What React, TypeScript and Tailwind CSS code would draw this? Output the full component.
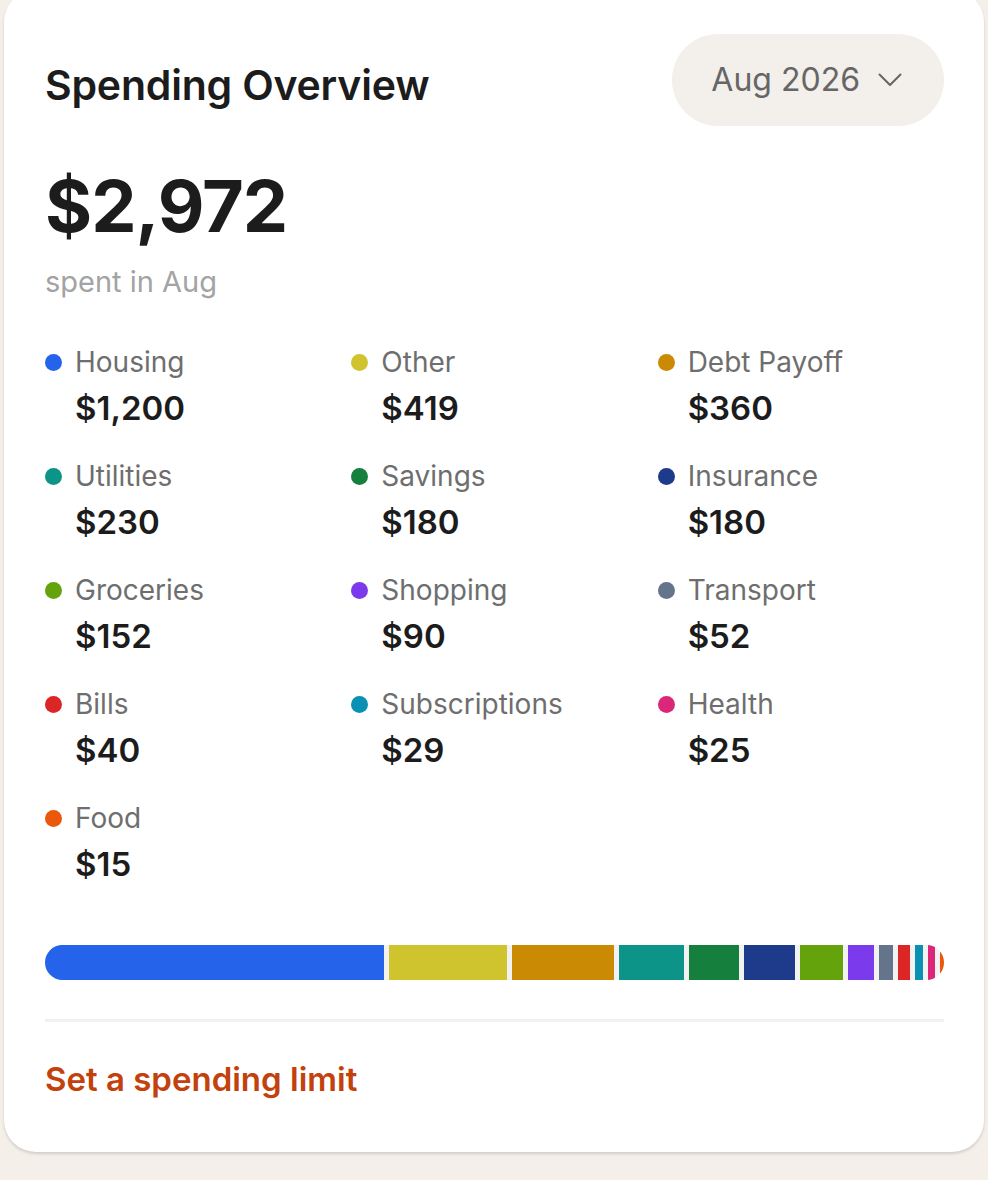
import React from "react";

const cats = [
  { name: "Housing", amount: 1200, color: "#2563eb" },
  { name: "Other", amount: 419, color: "#d0c42e" },
  { name: "Debt Payoff", amount: 360, color: "#ca8a04" },
  { name: "Utilities", amount: 230, color: "#0d9488" },
  { name: "Savings", amount: 180, color: "#15803d" },
  { name: "Insurance", amount: 180, color: "#1e3a8a" },
  { name: "Groceries", amount: 152, color: "#65a30d" },
  { name: "Shopping", amount: 90, color: "#7c3aed" },
  { name: "Transport", amount: 52, color: "#64748b" },
  { name: "Bills", amount: 40, color: "#dc2626" },
  { name: "Subscriptions", amount: 29, color: "#0891b2" },
  { name: "Health", amount: 25, color: "#db2777" },
  { name: "Food", amount: 15, color: "#ea580c" },
];

const fmt = (n: number) => "$" + n.toLocaleString("en-US");

export default function App() {
  return (
    <div
      className="min-h-screen bg-[#f4efe9] px-[4px] overflow-hidden"
      style={{ fontFamily: "Inter, 'Noto Sans', sans-serif" }}
    >
      <div className="mt-[-10px] bg-white rounded-[32px] shadow-[0_2px_3px_rgba(0,0,0,0.14)] pl-[41px] pr-[40px] pt-[44px] pb-[52px]">
        <div className="flex items-center justify-between h-[92px]">
          <h2 className="text-[41px] leading-[48px] font-semibold text-[#1c1c1c] tracking-[-0.2px] mt-[10px]">
            Spending Overview
          </h2>
          <button className="h-[92px] rounded-full bg-[#f3efea] pl-[39px] pr-[42px] flex items-center gap-[18px] text-[32px] text-[#666666]">
            <span>Aug 2026</span>
            <svg width="24" height="14" viewBox="0 0 24 14" fill="none">
              <polyline
                points="1.5,1.5 12,12 22.5,1.5"
                stroke="#666666"
                strokeWidth="2"
                strokeLinecap="round"
                strokeLinejoin="round"
              />
            </svg>
          </button>
        </div>

        <div className="mt-[44px] text-[72px] leading-[72px] font-bold text-[#1c1c1c] tracking-[-1px]">
          $2,972
        </div>
        <div className="mt-[22px] text-[29px] leading-[36px] text-[#a3a3a3]">
          spent in Aug
        </div>

        <div className="mt-[44px] grid grid-cols-3 gap-x-[20px] gap-y-[28px]">
          {cats.map((c) => (
            <div key={c.name}>
              <div className="flex items-center gap-[13px] h-[36px]">
                <span
                  className="w-[17px] h-[17px] rounded-full shrink-0"
                  style={{ backgroundColor: c.color }}
                />
                <span className="text-[28px] leading-[36px] text-[#6e6e6e]">
                  {c.name}
                </span>
              </div>
              <div className="mt-[6px] pl-[30px] text-[33px] leading-[44px] font-semibold text-[#1c1c1c]">
                {fmt(c.amount)}
              </div>
            </div>
          ))}
        </div>

        <div className="mt-[59px] flex h-[35px] gap-[5px] rounded-full overflow-hidden bg-[#f2f2f2]">
          {cats.map((c) => (
            <div
              key={c.name}
              className="h-full min-w-0"
              style={{ flexGrow: c.amount, flexBasis: 0, backgroundColor: c.color }}
            />
          ))}
        </div>

        <div className="mt-[39px] h-[3px] bg-[#f2f1ef]" />

        <div className="mt-[36px] text-[33px] leading-[42px] font-semibold text-[#c2410c]">
          Set a spending limit
        </div>
      </div>
    </div>
  );
}
